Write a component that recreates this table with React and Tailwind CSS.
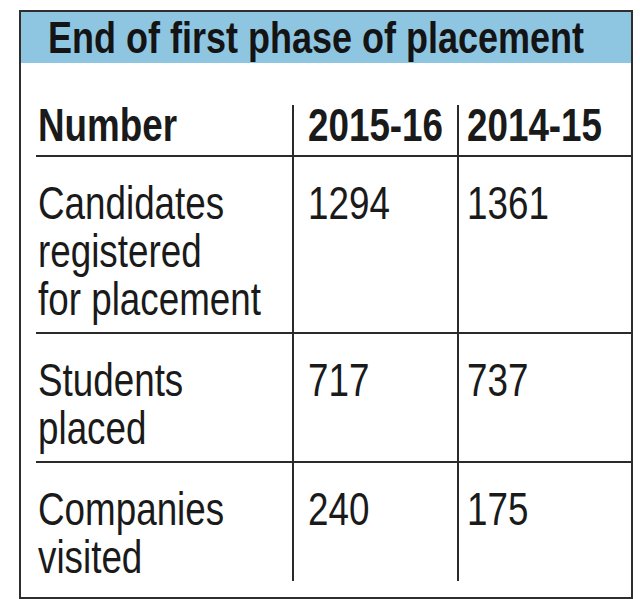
export default function App() {
  const font = { fontFamily: '"Liberation Sans", Arial, sans-serif' };
  const rows = [
    { label: ["Candidates", "registered", "for placement"], a: "1294", b: "1361", h: "h-[177px]" },
    { label: ["Students", "placed"], a: "717", b: "737", h: "h-[129px]" },
    { label: ["Companies", "visited"], a: "240", b: "175", h: "h-[115px]" },
  ];
  const N = ({ children, bold }) => (
    <span
      className={`inline-block whitespace-nowrap origin-left ${bold ? "scale-x-[0.8]" : "scale-x-[0.8]"}`}
    >
      {children}
    </span>
  );
  return (
    <div className="w-[640px] h-[599px] bg-white pt-[10px] pl-[19px] overflow-hidden" style={font}>
      <div className="w-[614px] h-[589px] border-2 border-[#2e2e2e] flex flex-col">
        <div className="h-[51px] bg-[#8ec6e2] pl-[27px] text-[45px] leading-[51px] font-bold text-[#141414] overflow-hidden">
          <span className="inline-block whitespace-nowrap origin-left scale-x-[0.8]">
            End of first phase of placement
          </span>
        </div>
        <div className="pl-[15px] pt-[42px] text-[#1a1a1a]">
          <div className="grid grid-cols-[256px_165px_1fr] h-[52px] border-b-2 border-[#2a2a2a] text-[46px] leading-[40px] font-bold">
            <div className="pl-[2px]"><N bold>Number</N></div>
            <div className="border-l-2 border-[#2a2a2a] pl-[14px]"><N bold>2015-16</N></div>
            <div className="border-l-2 border-[#2a2a2a] pl-[8px]"><N bold>2014-15</N></div>
          </div>
          {rows.map((r, i) => (
            <div
              key={i}
              className={`grid grid-cols-[256px_165px_1fr] ${r.h} ${i < 2 ? "border-b-2 border-[#2a2a2a]" : ""} text-[46px] leading-[48px] font-normal`}
            >
              <div className="pl-[2px] pt-[22px] flex flex-col items-start">
                {r.label.map((l, j) => (
                  <N key={j}>{l}</N>
                ))}
              </div>
              <div className="border-l-2 border-[#2a2a2a] pl-[14px] pt-[22px]"><N>{r.a}</N></div>
              <div className="border-l-2 border-[#2a2a2a] pl-[8px] pt-[22px]"><N>{r.b}</N></div>
            </div>
          ))}
        </div>
      </div>
    </div>
  );
}
